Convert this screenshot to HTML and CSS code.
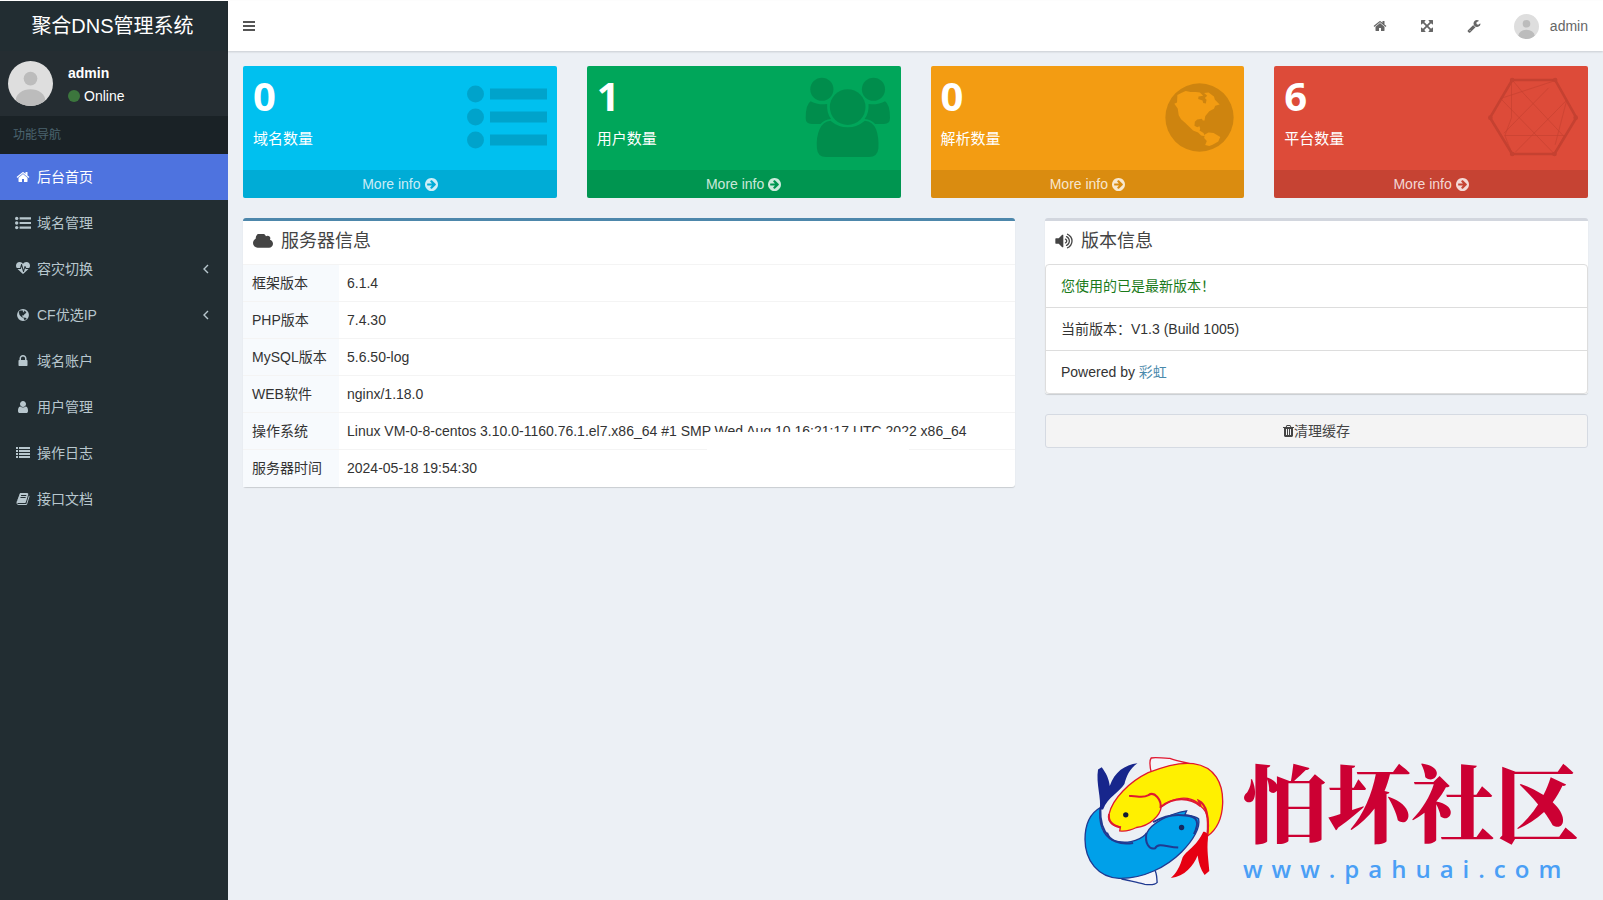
FILE: index.html
```html
<!DOCTYPE html>
<html lang="zh-CN">
<head>
    <meta charset="UTF-8">
    <meta name="viewport" content="width=device-width, initial-scale=1.0">
    <title>聚合DNS管理系统</title>
    <link rel="stylesheet" href="styles.css">
</head>
<body>
    <svg class="sprite" aria-hidden="true">
        <symbol id="icon-home" viewBox="0 0 1792 1792"><path d="M1472 992v480q0 26-19 45t-45 19h-384v-384h-256v384h-384q-26 0-45-19t-19-45v-480q0-1 .5-3t.5-3l575-474 575 474q1 2 1 6zm223-69l-62 74q-8 9-21 11h-3q-13 0-21-7l-692-577-692 577q-12 8-24 7-13-2-21-11l-62-74q-8-10-7-23.5t11-21.5l719-599q32-26 76-26t76 26l244 204v-195q0-14 9-23t23-9h192q14 0 23 9t9 23v408l219 182q10 8 11 21.5t-7 23.5z"/></symbol>
        <symbol id="icon-bars" viewBox="0 0 12 12"><path d="M0 1h12v2H0zM0 5h12v2H0zM0 9h12v2H0z"/></symbol>
        <symbol id="icon-expand" viewBox="0 0 1792 1792"><path d="M1411 541l-355 355 355 355 144-144q29-31 70-14 39 17 39 59v448q0 26-19 45t-45 19h-448q-42 0-59-40-17-39 14-69l144-144-355-355-355 355 144 144q31 30 14 69-17 40-59 40h-448q-26 0-45-19t-19-45v-448q0-42 40-59 39-17 69 14l144 144 355-355-355-355-144 144q-19 19-45 19-12 0-24-5-40-17-40-59v-448q0-26 19-45t45-19h448q42 0 59 40 17 39-14 69l-144 144 355 355 355-355-144-144q-31-30-14-69 17-40 59-40h448q26 0 45 19t19 45v448q0 42-39 59-13 5-25 5-26 0-45-19z"/></symbol>
        <symbol id="icon-wrench" viewBox="0 0 1792 1792"><path d="M448 1472q0-26-19-45t-45-19-45 19-19 45 19 45 45 19 45-19 19-45zm644-420l-682 682q-37 37-90 37-52 0-91-37l-106-108q-38-36-38-90 0-53 38-91l681-681q39 98 114.5 173.5t173.5 114.5zm634-435q0 39-23 106-47 134-164.5 217.5t-258.5 83.5q-185 0-316.5-131.5t-131.5-316.5 131.5-316.5 316.5-131.5q58 0 121.5 16.5t107.5 46.5q16 11 16 28t-16 28l-293 169v224l193 107q5-3 79-48.5t135.5-81 70.5-35.5q15 0 23.5 10t8.5 25z"/></symbol>
        <symbol id="icon-list-ul" viewBox="0 0 80 64"><circle cx="8.5" cy="9" r="8.5"/><circle cx="8.5" cy="32" r="8.5"/><circle cx="8.5" cy="55" r="8.5"/><path d="M23 3.5h57v11H23zM23 26.5h57v11H23zM23 49.5h57v11H23z"/></symbol>
        <symbol id="icon-list" viewBox="0 0 14 14"><path d="M0 1h2v2H0zM0 4h2v2H0zM0 7h2v2H0zM0 10h2v2H0zM3 1h11v2H3zM3 4h11v2H3zM3 7h11v2H3zM3 10h11v2H3z"/></symbol>
        <symbol id="icon-heartbeat" viewBox="0 0 1792 1792"><path d="M1280 896h305q-5 6-10 10.5t-9 7.5l-3 4-623 600q-18 18-44 18t-44-18l-624-602q-5-2-21-20h369q22 0 39.5-13.5t22.5-34.5l70-281 190 667q6 20 23 33t39 13q21 0 38-13t23-33l146-485 56 112q18 35 57 35zm512-428q0 145-103 300h-369l-111-221q-8-17-25.5-27t-36.5-8q-45 5-56 46l-129 430-196-686q-6-20-23.5-33t-39.5-13-39 13.5-22 34.5l-116 464h-423q-103-155-103-300 0-220 127-344t351-124q62 0 126.5 21.5t120 58 95.5 68.5 76 68q36-36 76-68t95.5-68.5 120-58 126.5-21.5q224 0 351 124t127 344z"/></symbol>
        <symbol id="icon-globe" viewBox="0 0 206 206"><path fill-rule="evenodd" d="M103 1a102 102 0 1 0 0 204a102 102 0 1 0 0-204zM28 62L36 58 37 36 50 29 62 24 76 27 92 27 104 28 114 38 100 40 99 48 112 52 114 60 122 61 124 50 119 45 126 38 117 30 130 28 146 40 149 50 163 64 150 68 146 77 132 84 120 99 118 112 113 112 110 107 96 109 89 116 88 128 96 132 103 129 105 137 103 142 115 149 119 159 108 157 99 148 84 142 74 132 60 119 48 108 41 96 38 76zM119 154L130 148 145 149 165 161 159 175 142 184 132 188 120 185 125 173 117 164z"/></symbol>
        <symbol id="icon-lock" viewBox="0 0 1792 1792"><path d="M640 768h512v-192q0-106-75-181t-181-75-181 75-75 181v192zm832 96v576q0 40-28 68t-68 28h-960q-40 0-68-28t-28-68v-576q0-40 28-68t68-28h32v-192q0-184 132-316t316-132 316 132 132 316v192h32q40 0 68 28t28 68z"/></symbol>
        <symbol id="icon-user" viewBox="0 0 1792 1792"><path d="M1536 1399q0 109-62.5 187t-150.5 78h-854q-88 0-150.5-78t-62.5-187q0-85 8.5-160.5t31.5-152 58.5-131 94-89 134.5-34.5q131 128 313 128t313-128q76 0 134.5 34.5t94 89 58.5 131 31.5 152 8.5 160.5zm-256-887q0 159-112.5 271.5t-271.5 112.5-271.5-112.5-112.5-271.5 112.5-271.5 271.5-112.5 271.5 112.5 112.5 271.5z"/></symbol>
        <symbol id="icon-book" viewBox="0 0 1792 1792"><path d="M1703 478q40 57 18 129l-275 906q-19 64-76.5 107.5t-122.5 43.5h-923q-77 0-148.5-53.5t-99.5-131.5q-24-67-2-127 0-4 3-27t4-37q1-8-3-21.5t-3-19.5q2-11 8-21t16.5-23.5 16.5-23.5q23-38 45-91.5t30-91.5q3-10 .5-30t-.5-28q3-11 17-28t17-23q21-36 42-92t25-90q1-9-2.5-32t.5-28q4-13 22-30.5t22-22.5q19-26 42.5-84.5t27.5-96.5q1-8-3-25.5t-2-26.5q2-8 9-18t18-23 17-21q8-12 16.5-30.5t15-35 16-36 19.5-32 26.5-23.5 36-11.5 47.5 5.5l-1 3q38-9 51-9h761q74 0 114 56t18 130l-274 906q-36 119-71.5 153.5t-128.5 34.5h-869q-27 0-38 15-11 16-1 43 24 70 144 70h923q29 0 56-15.5t35-41.5l300-987q7-22 5-57 38 15 59 43zm-1064 2q-4 13 2 22.5t20 9.5h608q13 0 25.5-9.5t16.5-22.5l21-64q4-13-2-22.5t-20-9.5h-608q-13 0-25.5 9.5t-16.5 22.5zm-83 256q-4 13 2 22.5t20 9.5h608q13 0 25.5-9.5t16.5-22.5l21-64q4-13-2-22.5t-20-9.5h-608q-13 0-25.5 9.5t-16.5 22.5z"/></symbol>
        <symbol id="icon-angle-left" viewBox="0 0 6 10"><path d="M5 1L1 5l4 4" fill="none" stroke="currentColor" stroke-width="1.4"/></symbol>
        <symbol id="icon-arrow" viewBox="128 128 1536 1536"><path d="M1413 896q0-27-18-45l-91-91-362-362q-18-18-45-18t-45 18l-91 91q-18 18-18 45t18 45l189 189h-502q-26 0-45 19t-19 45v128q0 26 19 45t45 19h502l-189 189q-18 18-18 45t18 45l91 91q18 18 45 18t45-18l362-362 91-91q18-18 18-45zm251 0q0 209-103 385.5t-279.5 279.5-385.5 103-385.5-103-279.5-279.5-103-385.5 103-385.5 279.5-279.5 385.5-103 385.5 103 279.5 279.5 103 385.5z"/></symbol>
        <symbol id="icon-users" viewBox="675 65 260 243">
            <circle cx="726" cy="101" r="35"/>
            <circle cx="882" cy="101" r="35"/>
            <circle cx="804" cy="155" r="54"/>
            <path d="M692 137q18 11 50 9q-2 28 12 45q-20 2-32 15h-27q-18 0-18-18q0-42 15-51zM917 137q-18 11-50 9q2 28-12 45q20 2 32 15h27q18 0 18-18q0-42-15-51z"/>
            <path d="M752 196q24 20 52 20t52-20q24 2 34 26q9 24 7 58q-3 26-28 26H738q-25 0-27-26q-3-34 8-58q10-24 33-26z"/>
        </symbol>
        <symbol id="icon-hexagon" viewBox="667 65 272 242">
            <path d="M740 74h130l64 114-66 110H740l-67-110z" fill="none" stroke="currentColor" stroke-width="8"/>
            <g fill="none" stroke="currentColor" stroke-width="2"><path d="M738 76v112l-20 54h180M742 76l30 36 122 130M705 130L870 76M850 98L715 235M705 130L868 298M905 135L870 270M905 135L750 292M898 242L868 298M718 242l22 56"/></g>
            <g><circle cx="740" cy="74" r="7"/><circle cx="870" cy="74" r="7"/><circle cx="932" cy="188" r="7"/><circle cx="868" cy="298" r="7"/><circle cx="740" cy="298" r="7"/><circle cx="674" cy="188" r="7"/></g>
        </symbol>
        <symbol id="icon-cloud" viewBox="64 256 1920 1280"><path d="M1984 1152q0 159-112.5 271.5t-271.5 112.5h-1088q-185 0-316.5-131.5t-131.5-316.5q0-132 71-241.5t187-163.5q-2-28-2-43 0-212 150-362t362-150q158 0 286.5 88t187.5 230q70-62 166-62 106 0 181 75t75 181q0 75-41 138 129 30 213 134.5t84 239.5z"/></symbol>
        <symbol id="icon-volume" viewBox="64 128 1664 1536"><path d="M832 352v1088q0 26-19 45t-45 19-45-19l-333-333h-262q-26 0-45-19t-19-45v-384q0-26 19-45t45-19h262l333-333q19-19 45-19t45 19 19 45zm384 544q0 76-42.5 141.5t-112.5 93.5q-10 5-25 5-26 0-45-18.5t-19-45.5q0-21 12-35.5t29-25 34-23 29-36 12-56.5-12-56.5-29-36-34-23-29-25-12-35.5q0-27 19-45.5t45-18.5q15 0 25 5 70 27 112.5 93t42.5 142zm256 0q0 153-85 282.5t-225 188.5q-13 5-25 5-27 0-46-19t-19-45q0-39 39-59 56-29 76-44 74-54 115.5-135.5t41.5-173.5-41.5-173.5-115.5-135.5q-20-15-76-44-39-20-39-59 0-26 19-45t45-19q13 0 26 5 140 59 225 188.5t85 282.5zm256 0q0 230-127 422.5t-338 283.5q-13 5-26 5-26 0-45-19t-19-45q0-36 39-59 7-4 22.5-10.5t22.5-10.5q46-25 82-51 123-91 192-227t69-289-69-289-192-227q-36-26-82-51-7-4-22.5-10.5t-22.5-10.5q-39-23-39-59 0-26 19-45t45-19q13 0 26 5 211 91 338 283.5t127 422.5z"/></symbol>
        <symbol id="icon-trash" viewBox="192 128 1408 1536"><path d="M704 1376v-704q0-14-9-23t-23-9h-64q-14 0-23 9t-9 23v704q0 14 9 23t23 9h64q14 0 23-9t9-23zm256 0v-704q0-14-9-23t-23-9h-64q-14 0-23 9t-9 23v704q0 14 9 23t23 9h64q14 0 23-9t9-23zm256 0v-704q0-14-9-23t-23-9h-64q-14 0-23 9t-9 23v704q0 14 9 23t23 9h64q14 0 23-9t9-23zm-544-992h448l-48-117q-7-9-17-11h-317q-10 2-17 11zm928 32v64q0 14-9 23t-23 9h-96v948q0 83-47 143.5t-113 60.5h-832q-66 0-113-58.5t-47-141.5v-952h-96q-14 0-23-9t-9-23v-64q0-14 9-23t23-9h309l70-167q15-37 54-63t79-26h320q40 0 79 26t54 63l70 167h309q14 0 23 9t9 23z"/></symbol>
        <symbol id="icon-avatar" viewBox="0 0 46 46">
            <clipPath id="avatar-clip"><circle cx="23" cy="23" r="23"/></clipPath>
            <g clip-path="url(#avatar-clip)"><path d="M0 0h46v46H0z" fill="#dedede"/><circle cx="23" cy="18" r="7" fill="#bcbcbc"/><ellipse cx="23" cy="40" rx="15" ry="11" fill="#bcbcbc"/></g>
        </symbol>
    </svg>

    <div class="wrapper">
        <aside class="sidebar">
            <a href="#" class="logo">聚合DNS管理系统</a>
            <div class="user-panel">
                <svg class="avatar"><use href="#icon-avatar"/></svg>
                <div class="info">
                    <p>admin</p>
                    <a href="#"><span class="dot"></span>Online</a>
                </div>
            </div>
            <div class="menu-header">功能导航</div>
            <nav class="menu">
                <a href="#" class="active"><svg class="icon"><use href="#icon-home"/></svg><span>后台首页</span></a>
                <a href="#"><svg class="icon"><use href="#icon-list-ul"/></svg><span>域名管理</span></a>
                <a href="#"><svg class="icon"><use href="#icon-heartbeat"/></svg><span>容灾切换</span><svg class="angle"><use href="#icon-angle-left"/></svg></a>
                <a href="#"><svg class="icon globe"><use href="#icon-globe"/></svg><span>CF优选IP</span><svg class="angle"><use href="#icon-angle-left"/></svg></a>
                <a href="#"><svg class="icon"><use href="#icon-lock"/></svg><span>域名账户</span></a>
                <a href="#"><svg class="icon"><use href="#icon-user"/></svg><span>用户管理</span></a>
                <a href="#"><svg class="icon"><use href="#icon-list"/></svg><span>操作日志</span></a>
                <a href="#"><svg class="icon"><use href="#icon-book"/></svg><span>接口文档</span></a>
            </nav>
        </aside>

        <div class="main">
            <header class="navbar">
                <button type="button" class="toggle" aria-label="菜单"><svg><use href="#icon-bars"/></svg></button>
                <div class="nav-right">
                    <a href="#" aria-label="首页"><svg><use href="#icon-home"/></svg></a>
                    <a href="#" aria-label="全屏"><svg><use href="#icon-expand"/></svg></a>
                    <a href="#" aria-label="设置"><svg><use href="#icon-wrench"/></svg></a>
                    <a href="#" class="nav-user"><svg class="avatar-sm"><use href="#icon-avatar"/></svg>admin</a>
                </div>
            </header>

            <main class="content">
                <div class="cards">
                    <div class="card aqua">
                        <div class="inner">
                            <div><h3>0</h3><p>域名数量</p></div>
                            <svg class="icon-list"><use href="#icon-list-ul"/></svg>
                        </div>
                        <a href="#" class="more">More info <svg><use href="#icon-arrow"/></svg></a>
                    </div>
                    <div class="card green">
                        <div class="inner">
                            <div><h3>1</h3><p>用户数量</p></div>
                            <svg class="icon-users"><use href="#icon-users"/></svg>
                        </div>
                        <a href="#" class="more">More info <svg><use href="#icon-arrow"/></svg></a>
                    </div>
                    <div class="card yellow">
                        <div class="inner">
                            <div><h3>0</h3><p>解析数量</p></div>
                            <svg class="icon-globe"><use href="#icon-globe"/></svg>
                        </div>
                        <a href="#" class="more">More info <svg><use href="#icon-arrow"/></svg></a>
                    </div>
                    <div class="card red">
                        <div class="inner">
                            <div><h3>6</h3><p>平台数量</p></div>
                            <svg class="icon-hexagon"><use href="#icon-hexagon"/></svg>
                        </div>
                        <a href="#" class="more">More info <svg><use href="#icon-arrow"/></svg></a>
                    </div>
                </div>

                <div class="row">
                    <section class="box server">
                        <h2><svg class="cloud"><use href="#icon-cloud"/></svg>服务器信息</h2>
                        <table>
                            <tbody>
                                <tr><th scope="row">框架版本</th><td>6.1.4</td></tr>
                                <tr><th scope="row">PHP版本</th><td>7.4.30</td></tr>
                                <tr><th scope="row">MySQL版本</th><td>5.6.50-log</td></tr>
                                <tr><th scope="row">WEB软件</th><td>nginx/1.18.0</td></tr>
                                <tr><th scope="row">操作系统</th><td>Linux VM-0-8-centos 3.10.0-1160.76.1.el7.x86_64 #1 SMP <span class="masked">Wed Aug 10 16:21:17 UTC 202</span>2 x86_64</td></tr>
                                <tr><th scope="row">服务器时间</th><td>2024-05-18 19:54:30</td></tr>
                            </tbody>
                        </table>
                    </section>

                    <div class="side">
                        <section class="box version">
                            <h2><svg class="volume"><use href="#icon-volume"/></svg>版本信息</h2>
                            <ul>
                                <li class="latest">您使用的已是最新版本！</li>
                                <li>当前版本：V1.3 (Build 1005)</li>
                                <li>Powered by <a href="#">彩虹</a></li>
                            </ul>
                        </section>
                        <button type="button" class="clear-btn"><svg><use href="#icon-trash"/></svg>清理缓存</button>
                    </div>
                </div>
            </main>

            <footer class="brand">
                <svg viewBox="40 45 425 395" aria-hidden="true">
                    <!-- yellow fish -->
                    <path d="M245 100C240 80 238 62 244 54C260 50 280 56 300 55C320 62 340 66 360 71" fill="#f4f4fa" stroke="#e01830" stroke-width="4"/>
                    <path d="M118 222C128 175 180 125 235 98C290 76 330 66 370 71C435 80 460 130 458 190C456 240 435 272 412 288C420 250 414 215 394 200C380 178 350 170 325 176C305 180 288 188 274 200C272 225 240 258 200 262C180 272 165 274 150 272L152 260C130 258 112 246 118 222z" fill="#fff000" stroke="#e01830" stroke-width="4"/>
                    <path d="M178 168C200 165 215 177 236 165C254 152 276 180 272 204M118 222C114 244 130 256 152 262M275 199C310 170 360 170 392 198L386 182C408 192 418 230 412 288" fill="none" stroke="#e01830" stroke-width="6"/>
                    <path d="M400 275C410 275 415 282 414 295C410 330 416 360 418 392L404 404C392 388 386 368 383 346C370 378 345 408 303 413C320 398 330 380 338 352C350 330 378 322 400 275z" fill="#e60012"/>
                    <circle cx="168" cy="224" r="8" fill="#111b33"/>
                    <!-- blue fish -->
                    <path d="M155 416C180 420 205 428 225 432C243 434 256 434 262 426C260 412 262 400 254 388" fill="#f4f4fa" stroke="#203a91" stroke-width="4"/>
                    <path d="M92 202C60 220 46 255 46 298C46 360 85 412 148 414C220 416 290 380 335 335C370 300 392 262 386 236C376 228 358 226 345 224L350 212C300 220 245 248 230 280C205 306 165 312 128 300C102 288 84 250 92 202z" fill="#00a0e9" stroke="#203a91" stroke-width="4"/>
                    <path d="M230 278C224 308 238 330 256 324C265 306 290 320 325 322M250 246C285 226 320 222 346 226C386 228 388 248 372 282M92 205C90 255 108 280 118 290L112 278C118 302 150 314 190 308" fill="none" stroke="#203a91" stroke-width="6"/>
                    <path d="M90 208C96 175 78 130 85 88L96 82C108 98 118 116 120 138C135 95 165 75 203 70C178 88 170 110 164 132C148 158 115 170 100 208z" fill="#17268c"/>
                    <circle cx="335" cy="262" r="8" fill="#14285f"/>
                </svg>
                <div>
                    <strong>怕坏社区</strong>
                    <a href="#">www.pahuai.com</a>
                </div>
            </footer>
        </div>
    </div>
</body>
</html>
```

FILE: styles.css
```css
* {
    box-sizing: border-box;
}
body {
    margin: 0;
    font-family: "Liberation Sans", "Noto Sans CJK SC", sans-serif;
    font-size: 14px;
    line-height: 20px;
    color: #333;
    background-color: #ecf0f5;
}
a {
    color: #4a89ab;
    text-decoration: none;
}
h2, h3, p, ul {
    margin: 0;
    padding: 0;
    font-weight: normal;
}
svg {
    fill: currentColor;
    flex-shrink: 0;
}
button {
    font: inherit;
    cursor: pointer;
}
.sprite {
    position: absolute;
    width: 0;
    height: 0;
}
.wrapper {
    display: flex;
    min-height: 100vh;
    border-top: 1px solid #fff;
}

/* sidebar */
.sidebar {
    width: 228px;
    flex-shrink: 0;
    background-color: #222d32;
}
.logo {
    display: block;
    padding-right: 3px;
    font-size: 20px;
    line-height: 50px;
    text-align: center;
    color: #fff;
}
.user-panel {
    display: flex;
    align-items: center;
    gap: 15px;
    height: 65px;
    padding: 0 8px;
    background-color: #252d32;
    color: #fff;
}
.avatar {
    width: 45px;
    height: 45px;
}
.info {
    padding-top: 2px;
}
.info p {
    font-weight: bold;
    margin-bottom: 3px;
}
.info a {
    display: flex;
    align-items: center;
    gap: 4px;
    color: #fff;
}
.dot {
    width: 12px;
    height: 12px;
    border-radius: 50%;
    background-color: #3c763d;
}
.menu-header {
    padding: 0 13px;
    font-size: 12px;
    line-height: 38px;
    color: #4b646f;
    background-color: #1a2226;
}
.menu a {
    display: flex;
    align-items: center;
    gap: 6px;
    height: 46px;
    padding: 0 19px 0 15px;
    color: #b8c7ce;
}
.menu a.active {
    color: #fff;
    background-color: #4e73df;
}
.menu .icon {
    width: 16px;
    height: 14px;
}
.menu .globe {
    height: 12px;
}
.menu .angle {
    width: 6px;
    height: 10px;
    margin-left: auto;
}

/* top bar */
.main {
    display: flex;
    flex-direction: column;
    flex: 1;
    min-width: 0;
}
.navbar {
    display: flex;
    justify-content: space-between;
    align-items: center;
    height: 50px;
    padding: 0 15px;
    background-color: #fff;
    box-shadow: 0 1px 2px rgba(0, 0, 0, 0.15);
    color: #555;
}
.toggle {
    padding: 0;
    border: 0;
    background: none;
    color: #555;
}
.toggle svg {
    display: block;
    width: 12px;
    height: 12px;
}
.nav-right {
    display: flex;
    align-items: center;
    gap: 33px;
}
.nav-right a {
    display: flex;
    align-items: center;
    gap: 11px;
    color: #666;
}
.nav-right svg {
    width: 14px;
    height: 14px;
}
.nav-right .avatar-sm {
    width: 25px;
    height: 25px;
}

/* statistic cards */
.content {
    padding: 15px;
}
.cards {
    display: grid;
    grid-template-columns: repeat(4, 1fr);
    gap: 30px;
}
.card {
    border-radius: 2px;
    overflow: hidden;
    color: #fff;
}
.inner {
    display: flex;
    justify-content: space-between;
    align-items: center;
    height: 104px;
    padding: 0 10px 2px;
}
.inner h3 {
    margin-bottom: 12px;
    font-family: "Open Sans", sans-serif;
    font-size: 40px;
    font-weight: bold;
    line-height: 42px;
}
.inner p {
    margin-bottom: 10px;
    font-size: 15px;
}
.inner svg {
    color: rgba(0, 0, 0, 0.15);
}
.icon-list {
    width: 80px;
    height: 64px;
}
.icon-users {
    width: 86px;
    height: 81px;
}
.icon-globe {
    width: 69px;
    height: 69px;
}
.inner .icon-hexagon {
    width: 90px;
    height: 80px;
    color: #c54131;
}
.more {
    display: flex;
    justify-content: center;
    align-items: center;
    gap: 4px;
    height: 28px;
    background-color: rgba(0, 0, 0, 0.1);
    color: rgba(255, 255, 255, 0.8);
}
.more svg {
    width: 13px;
    height: 13px;
}
.aqua {
    background-color: #00c0ef;
}
.green {
    background-color: #00a65a;
}
.yellow {
    background-color: #f39c12;
}
.red {
    background-color: #dd4b39;
}

/* boxes */
.row {
    display: grid;
    grid-template-columns: 772fr 543fr;
    gap: 30px;
    align-items: start;
    margin-top: 20px;
}
.box {
    border-top: 3px solid #d2d6de;
    border-radius: 3px;
    background-color: #fff;
    box-shadow: 0 1px 1px rgba(0, 0, 0, 0.15);
}
.server {
    border-top-color: #4d87ab;
}
.box h2 {
    display: flex;
    align-items: center;
    gap: 8px;
    height: 43px;
    padding: 0 10px 4px;
    font-size: 18px;
    color: #444;
}
.cloud {
    width: 20px;
    height: 14px;
}
.volume {
    width: 18px;
    height: 16px;
}
table {
    width: 100%;
    border-collapse: collapse;
}
th, td {
    height: 37px;
    padding: 8px;
    border-top: 1px solid #f4f4f4;
    text-align: left;
    font-weight: normal;
}
th {
    width: 96px;
    padding-left: 9px;
    white-space: nowrap;
    background-color: #f7fafd;
}
/* blanked-out lower part of the kernel build date */
.masked {
    position: relative;
}
.masked::after {
    content: "";
    position: absolute;
    top: 9px;
    left: -8px;
    right: 0;
    height: 20px;
    background-color: #fff;
}
.version ul {
    list-style: none;
    border: 1px solid #ddd;
    border-radius: 4px;
}
.version li {
    padding: 10px 15px;
    line-height: 22px;
}
.version li + li {
    border-top: 1px solid #ddd;
}
.version .latest {
    color: #1a7a1a;
}
.clear-btn {
    display: flex;
    justify-content: center;
    align-items: center;
    width: 100%;
    height: 34px;
    margin-top: 20px;
    border: 1px solid #d5dae2;
    border-radius: 3px;
    background-color: #f4f4f4;
    color: #444;
}
.clear-btn svg {
    width: 11px;
    height: 12px;
}

/* site brand */
.brand {
    display: flex;
    justify-content: flex-end;
    gap: 18px;
    margin-top: auto;
    padding: 0 24px 7px 0;
}
.brand svg {
    width: 142px;
    height: 132px;
}
.brand strong {
    display: block;
    font-family: "Noto Serif CJK SC", "Noto Sans CJK SC", serif;
    font-size: 84px;
    font-weight: 900;
    line-height: 90px;
    color: #cc0033;
}
.brand a {
    display: block;
    font-family: "Open Sans", sans-serif;
    font-size: 24px;
    font-weight: 600;
    line-height: 48px;
    letter-spacing: 9px;
    color: #4a9ff5;
}
```
